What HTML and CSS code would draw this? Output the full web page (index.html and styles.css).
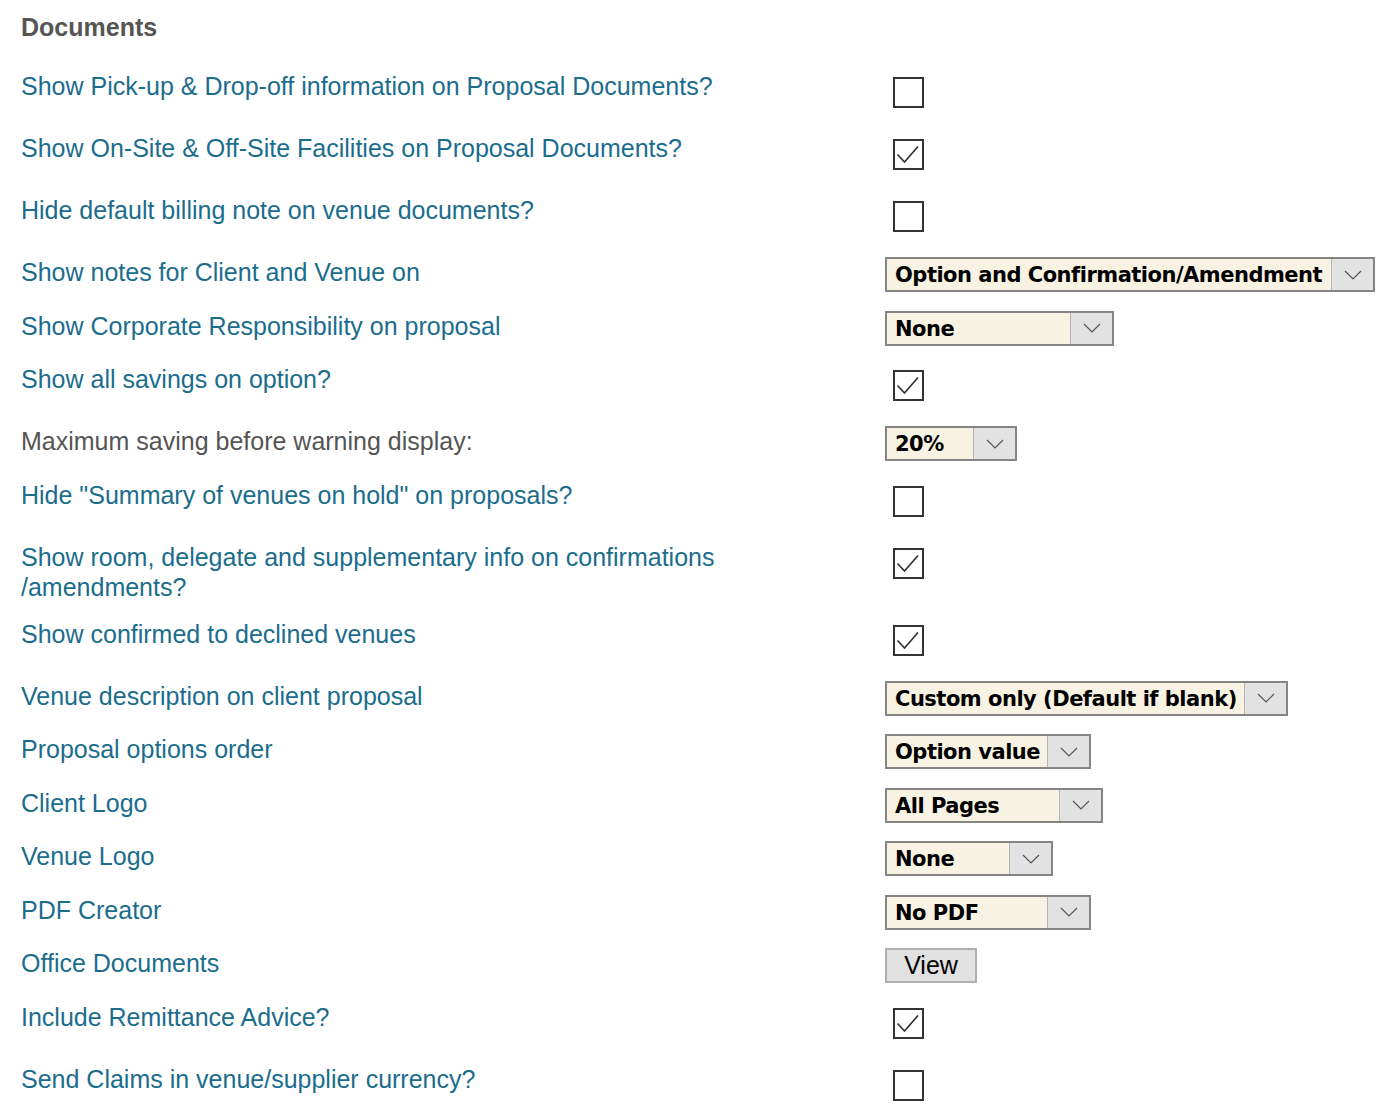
FILE: index.html
```html
<!DOCTYPE html>
<html lang="en">
<head>
<meta charset="utf-8">
<title>Documents</title>
<link rel="stylesheet" href="styles.css">
</head>
<body>
<div class="page">
  <h2 class="title">Documents</h2>
  <div class="settings">
    <div class="row">
      <div class="label">Show Pick-up &amp; Drop-off information on Proposal Documents?</div>
      <div class="control"><span class="cb"></span></div>
    </div>
    <div class="row">
      <div class="label">Show On-Site &amp; Off-Site Facilities on Proposal Documents?</div>
      <div class="control"><span class="cb checked"><svg viewBox="0 0 27 27" width="27" height="27"><path d="M2.5 13.5 L9.5 21 L23 5.5" /></svg></span></div>
    </div>
    <div class="row">
      <div class="label">Hide default billing note on venue documents?</div>
      <div class="control"><span class="cb"></span></div>
    </div>
    <div class="row">
      <div class="label">Show notes for Client and Venue on</div>
      <div class="control"><div class="select w490"><span class="select-value">Option and Confirmation/Amendment</span><span class="select-arrow"><svg viewBox="0 0 18 10" width="18" height="10"><path d="M1 1 L9 9 L17 1"/></svg></span></div></div>
    </div>
    <div class="row">
      <div class="label">Show Corporate Responsibility on proposal</div>
      <div class="control"><div class="select w229"><span class="select-value">None</span><span class="select-arrow"><svg viewBox="0 0 18 10" width="18" height="10"><path d="M1 1 L9 9 L17 1"/></svg></span></div></div>
    </div>
    <div class="row">
      <div class="label">Show all savings on option?</div>
      <div class="control"><span class="cb checked"><svg viewBox="0 0 27 27" width="27" height="27"><path d="M2.5 13.5 L9.5 21 L23 5.5" /></svg></span></div>
    </div>
    <div class="row">
      <div class="label muted">Maximum saving before warning display:</div>
      <div class="control"><div class="select w132"><span class="select-value">20%</span><span class="select-arrow"><svg viewBox="0 0 18 10" width="18" height="10"><path d="M1 1 L9 9 L17 1"/></svg></span></div></div>
    </div>
    <div class="row">
      <div class="label">Hide "Summary of venues on hold" on proposals?</div>
      <div class="control"><span class="cb"></span></div>
    </div>
    <div class="row">
      <div class="label">Show room, delegate and supplementary info on confirmations<br>/amendments?</div>
      <div class="control"><span class="cb checked"><svg viewBox="0 0 27 27" width="27" height="27"><path d="M2.5 13.5 L9.5 21 L23 5.5" /></svg></span></div>
    </div>
    <div class="row">
      <div class="label">Show confirmed to declined venues</div>
      <div class="control"><span class="cb checked"><svg viewBox="0 0 27 27" width="27" height="27"><path d="M2.5 13.5 L9.5 21 L23 5.5" /></svg></span></div>
    </div>
    <div class="row">
      <div class="label">Venue description on client proposal</div>
      <div class="control"><div class="select w403"><span class="select-value">Custom only (Default if blank)</span><span class="select-arrow"><svg viewBox="0 0 18 10" width="18" height="10"><path d="M1 1 L9 9 L17 1"/></svg></span></div></div>
    </div>
    <div class="row">
      <div class="label">Proposal options order</div>
      <div class="control"><div class="select w206"><span class="select-value">Option value</span><span class="select-arrow"><svg viewBox="0 0 18 10" width="18" height="10"><path d="M1 1 L9 9 L17 1"/></svg></span></div></div>
    </div>
    <div class="row">
      <div class="label">Client Logo</div>
      <div class="control"><div class="select w218"><span class="select-value">All Pages</span><span class="select-arrow"><svg viewBox="0 0 18 10" width="18" height="10"><path d="M1 1 L9 9 L17 1"/></svg></span></div></div>
    </div>
    <div class="row">
      <div class="label">Venue Logo</div>
      <div class="control"><div class="select w168"><span class="select-value">None</span><span class="select-arrow"><svg viewBox="0 0 18 10" width="18" height="10"><path d="M1 1 L9 9 L17 1"/></svg></span></div></div>
    </div>
    <div class="row">
      <div class="label">PDF Creator</div>
      <div class="control"><div class="select w206"><span class="select-value">No PDF</span><span class="select-arrow"><svg viewBox="0 0 18 10" width="18" height="10"><path d="M1 1 L9 9 L17 1"/></svg></span></div></div>
    </div>
    <div class="row">
      <div class="label">Office Documents</div>
      <div class="control"><button class="btn" type="button">View</button></div>
    </div>
    <div class="row">
      <div class="label">Include Remittance Advice?</div>
      <div class="control"><span class="cb checked"><svg viewBox="0 0 27 27" width="27" height="27"><path d="M2.5 13.5 L9.5 21 L23 5.5" /></svg></span></div>
    </div>
    <div class="row">
      <div class="label">Send Claims in venue/supplier currency?</div>
      <div class="control"><span class="cb"></span></div>
    </div>
  </div>
</div>
</body>
</html>
```

FILE: styles.css
```css
html, body {
  margin: 0;
  padding: 0;
  background: #ffffff;
}

body {
  font-family: "Liberation Sans", Arial, sans-serif;
}

.page {
  padding: 12px 0 0 21px;
}

.title {
  margin: 0 0 29px 0;
  font-size: 25px;
  line-height: 30px;
  font-weight: bold;
  color: #555555;
}

.row {
  display: grid;
  grid-template-columns: 864px auto;
  align-items: start;
  padding-bottom: 17px;
}

.label {
  font-size: 25px;
  line-height: 30px;
  color: #1b6d8d;
}

.label.muted {
  color: #555555;
}

.control {
  display: flex;
  align-items: flex-start;
}

.cb {
  display: flex;
  align-items: center;
  justify-content: center;
  box-sizing: border-box;
  width: 31px;
  height: 31px;
  margin: 6px 0 8px 8px;
  border: 2px solid #333333;
  background: #ffffff;
}

.cb svg path {
  fill: none;
  stroke: #333333;
  stroke-width: 1.7;
}

.select {
  display: flex;
  box-sizing: border-box;
  height: 35px;
  margin-bottom: 1.5px;
  border: 2px solid #858585;
  background: #f8f2e2;
}

.select-value {
  flex: 1;
  padding: 2px 0 0 8px;
  font-family: "DejaVu Sans", Verdana, sans-serif;
  font-weight: bold;
  font-size: 21px;
  letter-spacing: -0.5px;
  line-height: 29px;
  color: #000000;
  white-space: nowrap;
  overflow: hidden;
}

.select-arrow {
  display: flex;
  align-items: center;
  justify-content: center;
  width: 41px;
  border-left: 1px solid #b5b5b5;
  background: #e2e2e2;
}

.select-arrow svg path {
  fill: none;
  stroke: #555555;
  stroke-width: 1.2;
}

.w490 { width: 490px; }
.w229 { width: 229px; }
.w132 { width: 132px; }
.w403 { width: 403px; }
.w206 { width: 206px; }
.w218 { width: 218px; }
.w168 { width: 168px; }

.btn {
  box-sizing: border-box;
  width: 92px;
  height: 35px;
  margin: 0 0 1.5px 0;
  padding: 0;
  border: 2px solid #b0b0b0;
  background: #e1e1e1;
  font-family: "Liberation Sans", Arial, sans-serif;
  font-size: 25px;
  line-height: 31px;
  color: #000000;
}
```
